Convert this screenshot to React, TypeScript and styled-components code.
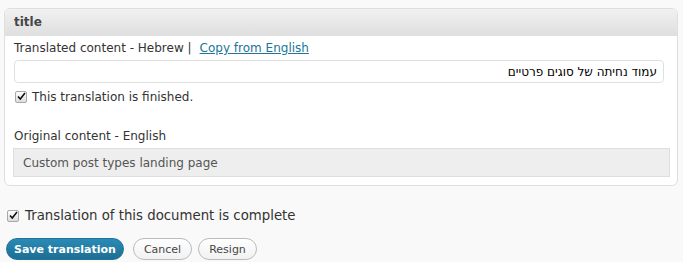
import styled, { createGlobalStyle } from 'styled-components';

const Global = createGlobalStyle`
  html, body {
    margin: 0;
    padding: 0;
    background: #f9f9f9;
  }
  body {
    font-family: 'DejaVu Sans', Verdana, sans-serif;
    font-size: 12px;
    color: #333;
  }
`;

const Page = styled.div`
  padding: 8px 5px 0 4px;
`;

const Box = styled.div`
  border: 1px solid #dfdfdf;
  border-radius: 6px;
  background: #fff;
  overflow: hidden;
`;

const BoxHeader = styled.div`
  height: 26px;
  padding: 0 9px;
  display: flex;
  align-items: center;
  background: linear-gradient(to bottom, #f1f1f1, #dfdfdf);
  border-bottom: 1px solid #dfdfdf;
  font-weight: bold;
  color: #464646;
`;

const BoxBody = styled.div`
  padding: 4px 7px 8px 8px;
`;

const Label = styled.div`
  line-height: 16px;
  color: #333;
  margin-left: 1px;
`;

const Link = styled.a`
  color: #21759b;
  text-decoration: underline;
  margin-left: 8px;
`;

const TextInput = styled.div`
  margin: 4px 6px 0 1px;
  height: 21px;
  border: 1px solid #dfdfdf;
  border-radius: 4px;
  direction: rtl;
  padding: 0 6px;
  display: flex;
  align-items: center;
  color: #000;
`;

const CheckRow = styled.label<{ $big?: boolean; $inset?: boolean }>`
  display: flex;
  align-items: center;
  gap: ${(p) => (p.$big ? '6px' : '5px')};
  font-size: ${(p) => (p.$big ? '13.3px' : '12px')};
  margin: ${(p) => (p.$inset ? '7px 0 0 2px' : '0')};
  color: #333;
`;

const Check = styled.span`
  width: 10px;
  height: 10px;
  border: 1px solid #a8a8a8;
  border-radius: 2px;
  background: linear-gradient(to bottom, #fff, #dcdcdc);
  position: relative;
  flex: none;
  svg {
    position: absolute;
    left: 0px;
    top: -1px;
  }
`;

const Section = styled.div`
  margin-top: 24px;
`;

const Original = styled.div`
  margin-top: 4px;
  height: 27px;
  border: 1px solid #dfdfdf;
  background: #eee;
  padding: 0 9px;
  display: flex;
  align-items: center;
  color: #555;
`;

const Footer = styled.div`
  padding: 22px 0 0 3px;
`;

const Buttons = styled.div`
  display: flex;
  gap: 6px;
  margin-top: 15px;
  margin-left: -1px;
`;

const Button = styled.button<{ $primary?: boolean }>`
  font-family: 'DejaVu Sans', Verdana, sans-serif;
  font-size: 11px;
  height: 22px;
  border-radius: 11px;
  padding: 0 10px;
  cursor: pointer;
  ${(p) =>
    p.$primary
      ? `
    background: linear-gradient(to bottom, #2a8bb6, #1d6e93);
    border: 1px solid #21759b;
    color: #fff;
    font-weight: bold;
    padding: 0 7px;
    margin-right: 3px;
  `
      : `
    background: linear-gradient(to bottom, #fefefe, #f2f2f2);
    border: 1px solid #bbb;
    color: #464646;
  `}
`;

const CheckBox = () => (
  <Check>
    <svg width="11" height="11" viewBox="0 0 11 11">
      <path d="M2 5.5 L4.3 8 L9 2" fill="none" stroke="#111" strokeWidth="1.6" />
    </svg>
  </Check>
);

export default function App() {
  return (
    <>
      <Global />
      <Page>
        <Box>
          <BoxHeader>title</BoxHeader>
          <BoxBody>
            <Label>
              Translated content - Hebrew |<Link href="#">Copy from English</Link>
            </Label>
            <TextInput>עמוד נחיתה של סוגים פרטיים</TextInput>
            <CheckRow $inset>
              <CheckBox />
              This translation is finished.
            </CheckRow>
            <Section>
              <Label>Original content - English</Label>
              <Original>Custom post types landing page</Original>
            </Section>
          </BoxBody>
        </Box>
        <Footer>
          <CheckRow $big>
            <CheckBox />
            Translation of this document is complete
          </CheckRow>
          <Buttons>
            <Button $primary>Save translation</Button>
            <Button>Cancel</Button>
            <Button>Resign</Button>
          </Buttons>
        </Footer>
      </Page>
    </>
  );
}
